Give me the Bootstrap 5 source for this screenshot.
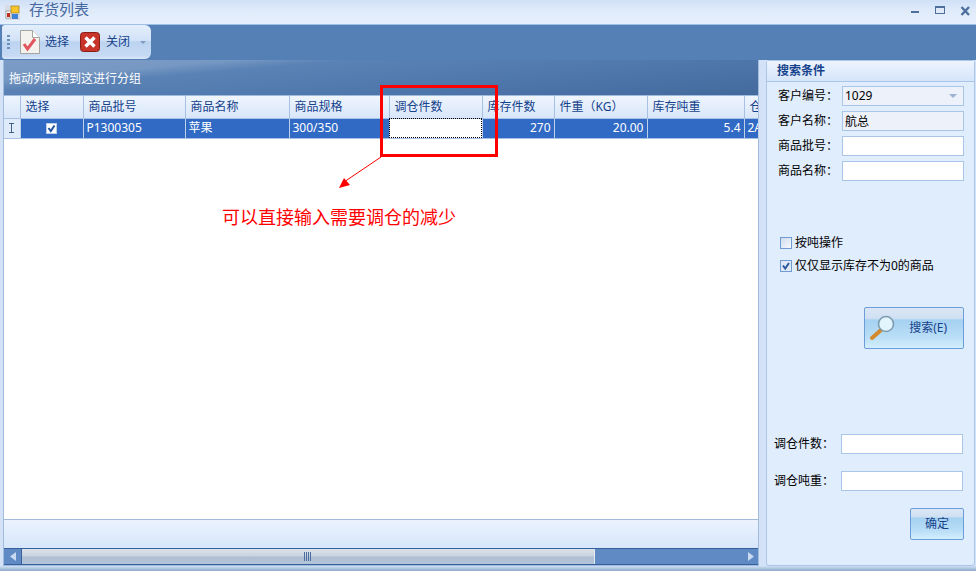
<!DOCTYPE html>
<html lang="zh"><head><meta charset="utf-8"><title>存货列表</title>
<link rel="stylesheet" href="https://cdn.jsdelivr.net/npm/bootstrap@5.3.0/dist/css/bootstrap.min.css">
<style>
html,body{height:571px;overflow:hidden}
body{margin:0;background:#d3e2f6;font:12px/16px "Noto Sans","Noto Sans CJK SC",sans-serif;color:#000;position:relative}
.titlebar{height:25px;background:linear-gradient(#cfe0f7,#dfeafa 40%,#e6f0fc);border-bottom:1px solid #a0bfe6;padding-left:5px}
.apptitle{font-size:15px;color:#45689f;margin-left:9px;line-height:18px;margin-top:-6px}
.winbtns{margin-left:auto;gap:15px;padding-right:5px;margin-top:-3px}
.band{height:35px;background:#5580b6;padding-left:2px}
.strip{width:149px;height:34px;border-radius:3px 6px 6px 3px;background:linear-gradient(#e4effc,#d2e2f7 45%,#bcd3f0 50%,#c6daf4 90%,#d9e7f9);color:#15428b}
.grip{width:3px;margin-left:5px;height:14px;background:repeating-linear-gradient(#6d8fbb 0 2px,transparent 2px 4px)}
.docicon{margin-left:10px}
.lbl-pick{margin-left:5px}
.xicon{margin-left:11px}
.lbl-close{margin-left:6px}
.strip .caret{border-top-color:#7f9cc4;border-width:3px 3px 0;margin:0 0 0 10px}
.mainrow{height:506px}
.gridbox{width:756px;margin-left:3px;background:#fff;height:506px;border:1px solid #a0bbdc;border-top:0}
.grouphead{height:36px;background:linear-gradient(175deg,#7a9cc6 0,#7698c3 20%,#5a82b5 30%,#4f78ad 60%,#446a9d);color:#fff;padding:10px 0 0 5px;line-height:17px;border-bottom:1px solid #a0bbdc}
table.sheet{table-layout:fixed;width:754px;margin:0;border-collapse:collapse;font-size:12px;--bs-table-bg:transparent}
.sheet col:nth-child(1){width:16px}
.sheet col:nth-child(2){width:63px}
.sheet col:nth-child(3){width:102px}
.sheet col:nth-child(4){width:104px}
.sheet col:nth-child(5){width:100px}
.sheet col:nth-child(6){width:93px}
.sheet col:nth-child(7){width:72px}
.sheet col:nth-child(8){width:93px}
.sheet col:nth-child(9){width:97px}
.sheet col:nth-child(10){width:14px}
.sheet th{height:22px;padding:0 0 0 5px;font-weight:400;color:#15428b;background:linear-gradient(#eef5fe,#d8e6f9);border:0;border-right:1px solid #a6c1e4;border-bottom:1px solid #a6c1e4;white-space:nowrap;overflow:hidden;vertical-align:middle}
.sheet td{height:20px;padding:0 3px;background:#316ac5;color:#fff;border:0;border-right:1px solid #bcd0ea;border-bottom:1px solid #a6c1e4;white-space:nowrap;overflow:hidden;line-height:18px}
.sheet td.indicator{background:#e0ebfa;padding:0;text-align:center}
.sheet td.editing{background:#fff;outline:1px dotted #000;outline-offset:-1px}
.blank{height:380px}
.sumrow{height:29px;background:linear-gradient(#ecf3fe,#d6e6fb);border-top:1px solid #a0bbdc}
.hscroll{height:17px;background:#5f8ac4;border-top:1px solid #35609c;border-bottom:1px solid #35609c}
.sbtn{width:18px;border-right:1px solid #35609c}
.sthumb{width:573px;background:linear-gradient(#dce2e9,#c9d3df 45%,#aebfd4 55%,#b5c5d8);border-right:1px solid #e4ebf3}
.sgrip{width:7px;height:9px;margin-left:282px;background:repeating-linear-gradient(90deg,#4d6f9f 0 1px,transparent 1px 2px)}
.side{width:209px;height:506px;margin-left:7px;background:#e0edfd;border:1px solid #a9c5e8;border-radius:3px}
.sidehead{height:21px;background:linear-gradient(#edf4fe,#d5e5fa);border-bottom:1px solid #a9c5e8;color:#15428b;font-weight:700;padding-left:10px;line-height:20px}
.fields{padding:4px 10px 0 11px}
.fieldrow{height:20px;margin-bottom:5px}
.fieldrow label{width:64px}
.fieldrow .form-control{width:122px;height:20px;padding:0 2px;font-size:12px;line-height:18px;border:1px solid #a9c5e8;border-radius:0;background:#fff;color:#000;box-shadow:none}
.fieldrow .form-control.muted{background:#edf1f9}
.caret{margin-left:auto;margin-right:4px;width:0;height:0;border:4px solid transparent;border-top:4px solid #9db3d1;border-bottom:0}
.checks{margin:50px 0 0 13px;height:76px}
.checkline{height:23px;gap:3px}
.cbox{width:12px;height:12px;border:1px solid #6f9ad2;background:linear-gradient(135deg,#cfdcee,#f6f9fe);flex:none}
.btn.glass{--bs-btn-color:#15428b;--bs-btn-hover-color:#15428b;--bs-btn-active-color:#15428b;color:#15428b;border:1px solid #6c9ddb;border-radius:2px;background:linear-gradient(#dbe7f5 0,#cfdff2 26%,#a6d1f1 30%,#b8ddf6 70%,#d3eefd);padding:0;font-size:12px;display:flex;align-items:center}
.searchbtn{width:100px;height:42px;margin-left:97px}
.fieldrow.lower{height:20px;margin:0 0 17px 0}
.lowerfields{padding:0 11px 0 7px;margin-top:85px}
.lowerfields label{width:67px}
.okbtn{width:54px;height:32px;margin:2px 0 0 143px;justify-content:center}
.note-box{position:absolute;left:380px;top:85px;width:118px;height:72px;border:3px solid #f00}
.note-arrow{position:absolute;left:330px;top:150px}
.note-text{position:absolute;left:222px;top:206px;font-size:18px;line-height:22px;color:#f00;white-space:nowrap}
.footline{height:5px;background:linear-gradient(#cfe0f5,#8fa9c9)}
</style></head>
<body>
<div class="titlebar d-flex align-items-center">
<svg width="15" height="15" viewBox="0 0 15 15"><rect width="15" height="15" fill="#d8dde4"/><rect x="1" y="6" width="5" height="7" fill="#fff" stroke="#777" stroke-width=".6"/><rect x="2" y="8" width="3" height="4" fill="#c02a20"/><rect x="6" y="1" width="8" height="7" fill="#f7c52a" stroke="#9a7a20" stroke-width=".6"/><rect x="7" y="9" width="6" height="5" fill="#3f83d8"/></svg>
<span class="apptitle">存货列表</span>
<div class="winbtns d-flex align-items-center">
<svg width="9" height="9" viewBox="0 0 9 9"><rect y="5" width="8" height="2" fill="#4e6f9e"/></svg>
<svg width="10" height="9" viewBox="0 0 10 9"><rect x=".5" y=".5" width="9" height="7" fill="#dfe9f8" stroke="#4e6f9e"/><rect width="10" height="2" fill="#4e6f9e"/></svg>
<svg width="11" height="10" viewBox="0 0 11 10"><path d="M1.5 1l7.5 8M9 1L1.5 9" stroke="#4e6f9e" stroke-width="2.4"/></svg>
</div></div>
<div class="band">
<div class="strip d-flex align-items-center">
<span class="grip"></span>
<svg width="20" height="24" viewBox="0 0 20 24" class="docicon"><path d="M.5.5h12l7 7v16H.5z" fill="#f3f2ee" stroke="#a5a5a0"/><path d="M12.5.5v7h7" fill="#fff" stroke="#a5a5a0"/><path d="M4 14l3.5 5L15 9" fill="none" stroke="#e0565c" stroke-width="3"/></svg>
<span class="lbl-pick">选择</span>
<svg width="20" height="20" viewBox="0 0 20 20" class="xicon"><rect x=".5" y=".5" width="19" height="19" rx="3" fill="#c8342a" stroke="#8a1f18"/><path d="M5.5 5.5l9 9M14.5 5.5l-9 9" stroke="#fff" stroke-width="3.4"/></svg>
<span class="lbl-close">关闭</span>
<span class="caret"></span>
</div></div>
<div class="mainrow d-flex">
<div class="gridbox">
<div class="grouphead">拖动列标题到这进行分组</div>
<table class="table sheet">
<colgroup><col><col><col><col><col><col><col><col><col><col></colgroup>
<thead><tr><th></th><th>选择</th><th>商品批号</th><th>商品名称</th><th>商品规格</th><th>调仓件数</th><th>库存件数</th><th>件重（KG）</th><th>库存吨重</th><th>仓</th></tr></thead>
<tbody><tr>
<td class="indicator"><svg width="7" height="10" viewBox="0 0 7 10"><path d="M1 .5h5M1 9.5h5M3.5 .5v9" stroke="#44618c" fill="none"/></svg></td>
<td class="text-center"><svg width="11" height="11" viewBox="0 0 11 11" class="align-middle"><rect x=".5" y=".5" width="10" height="10" fill="#fff" stroke="#b8cde8"/><path d="M2.5 5l2.3 3 3.7-5.5" fill="none" stroke="#21529f" stroke-width="2"/></svg></td>
<td>P1300305</td><td>苹果</td><td>300/350</td><td class="editing"></td>
<td class="text-end">270</td><td class="text-end">20.00</td><td class="text-end">5.4</td><td>2A</td>
</tr></tbody></table>
<div class="blank"></div>
<div class="sumrow"></div>
<div class="hscroll d-flex">
<div class="sbtn d-flex align-items-center justify-content-center"><svg width="6" height="9" viewBox="0 0 6 9"><path d="M6 0v9L0 4.5z" fill="#c9daf0"/></svg></div>
<div class="sthumb d-flex align-items-center"><span class="sgrip"></span></div>
<div class="flex-grow-1 d-flex align-items-center justify-content-end pe-1"><svg width="6" height="9" viewBox="0 0 6 9"><path d="M0 0v9l6-4.5z" fill="#c9daf0"/></svg></div>
</div></div>
<div class="side">
<div class="sidehead">搜索条件</div>
<div class="fields">
<div class="fieldrow d-flex align-items-center"><label>客户编号：</label><div class="form-control muted d-flex align-items-center">1029<span class="caret"></span></div></div>
<div class="fieldrow d-flex align-items-center"><label>客户名称：</label><input class="form-control muted" value="航总" readonly></div>
<div class="fieldrow d-flex align-items-center"><label>商品批号：</label><input class="form-control"></div>
<div class="fieldrow d-flex align-items-center"><label>商品名称：</label><input class="form-control"></div>
</div>
<div class="checks">
<div class="checkline d-flex align-items-center"><span class="cbox"></span><span>按吨操作</span></div>
<div class="checkline d-flex align-items-center"><svg width="12" height="12" viewBox="0 0 12 12"><rect x=".5" y=".5" width="11" height="11" fill="#dfe8f5" stroke="#6f9ad2"/><path d="M3 5.5l2.2 3L9 3" fill="none" stroke="#2c5aa0" stroke-width="2"/></svg><span>仅仅显示库存不为0的商品</span></div>
</div>
<button type="button" class="btn glass searchbtn"><svg width="28" height="26" viewBox="0 0 28 26" class="ms-1"><path d="M3 23l9-8" stroke="#d38a2c" stroke-width="4" stroke-linecap="round"/><circle cx="17" cy="9" r="7.5" fill="#e3f5fc" stroke="#7d9cb0" stroke-width="1.6"/></svg><span class="ms-auto me-3">搜索(E)</span></button>
<div class="lowerfields">
<div class="fieldrow lower d-flex align-items-center"><label>调仓件数：</label><input class="form-control"></div>
<div class="fieldrow lower d-flex align-items-center"><label>调仓吨重：</label><input class="form-control"></div>
</div>
<button type="button" class="btn glass okbtn">确定</button>
</div></div>
<div class="footline"></div>
<div class="note-box"></div>
<svg class="note-arrow" width="60" height="45" viewBox="0 0 60 45"><path d="M51 7L14 32" stroke="#f00" fill="none"/><path d="M9 38l11-3-6-7z" fill="#f00"/></svg>
<div class="note-text">可以直接输入需要调仓的减少</div>
</body></html>
